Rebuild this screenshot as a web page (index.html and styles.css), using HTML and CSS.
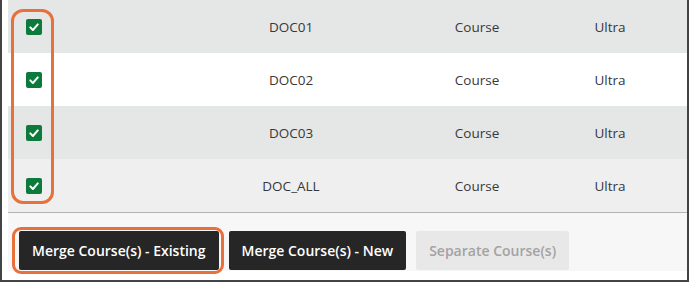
FILE: index.html
```html
<!DOCTYPE html>
<html>
<head>
  <title>Merge courses</title>
  <link rel="stylesheet" href="styles.css">
</head>
<body>
<div class="frame">
  <div class="list">
    <div class="row odd">
      <div class="cell check"><span class="box"><svg viewBox="0 0 16 16" width="16" height="16"><path d="M4.3 8.4 L6.9 11 L11.8 5.4" fill="none" stroke="#fff" stroke-width="2" stroke-linecap="round" stroke-linejoin="round"/></svg></span></div>
      <div class="cell name">DOC01</div>
      <div class="cell">Course</div>
      <div class="cell">Ultra</div>
    </div>
    <div class="row">
      <div class="cell check"><span class="box"><svg viewBox="0 0 16 16" width="16" height="16"><path d="M4.3 8.4 L6.9 11 L11.8 5.4" fill="none" stroke="#fff" stroke-width="2" stroke-linecap="round" stroke-linejoin="round"/></svg></span></div>
      <div class="cell name">DOC02</div>
      <div class="cell">Course</div>
      <div class="cell">Ultra</div>
    </div>
    <div class="row odd">
      <div class="cell check"><span class="box"><svg viewBox="0 0 16 16" width="16" height="16"><path d="M4.3 8.4 L6.9 11 L11.8 5.4" fill="none" stroke="#fff" stroke-width="2" stroke-linecap="round" stroke-linejoin="round"/></svg></span></div>
      <div class="cell name">DOC03</div>
      <div class="cell">Course</div>
      <div class="cell">Ultra</div>
    </div>
    <div class="row hover">
      <div class="cell check"><span class="box"><svg viewBox="0 0 16 16" width="16" height="16"><path d="M4.3 8.4 L6.9 11 L11.8 5.4" fill="none" stroke="#fff" stroke-width="2" stroke-linecap="round" stroke-linejoin="round"/></svg></span></div>
      <div class="cell name">DOC_ALL</div>
      <div class="cell">Course</div>
      <div class="cell">Ultra</div>
    </div>
    <div class="mark-checks"></div>
  </div>
  <div class="actions">
    <button class="btn primary focus">Merge Course(s) - Existing<span class="mark-btn"></span></button>
    <button class="btn primary">Merge Course(s) - New</button>
    <button class="btn disabled">Separate Course(s)</button>
  </div>
</div>
</body>
</html>
```

FILE: styles.css
```css
* { box-sizing: border-box; }

html, body { margin: 0; padding: 0; background: #fff; }

.frame {
  width: 689px;
  height: 282px;
  border-left: 2px solid #434343;
  border-right: 2px solid #434343;
  border-bottom: 2px solid #434343;
  padding: 0 0 9px 6px;
  background: #fff;
  font-family: "Open Sans", "Liberation Sans", sans-serif;
  overflow: hidden;
}

.list {
  position: relative;
  border-bottom: 1px solid #b4b4b4;
}

.row {
  display: grid;
  grid-template-columns: 52px 322px 190px 76px 1fr;
  height: 53px;
  align-items: center;
  background: #fff;
  color: #383838;
  font-size: 13.5px;
}
.row.odd { background: #e5e6e6; }
.row.hover { background: #efefef; }

.cell { text-align: center; }
.cell.name { padding-left: 140px; }
.cell.check { text-align: left; padding-left: 18px; display: flex; }

.box {
  width: 16px;
  height: 16px;
  border-radius: 2px;
  background: #0b7a3b;
  display: block;
}
.box svg { display: block; }

.mark-checks {
  position: absolute;
  left: 3px;
  top: 9px;
  width: 43px;
  height: 195px;
  border: 3px solid #e8703a;
  border-radius: 12px;
}

.actions {
  display: flex;
  gap: 10px;
  height: 58px;
  padding: 18px 0 0 11px;
  background: #f8f7f7;
}

.btn {
  position: relative;
  height: 39px;
  padding: 0 13px;
  border: none;
  border-radius: 2px;
  font-family: "Open Sans", "Liberation Sans", sans-serif;
  font-size: 14px;
  font-weight: 600;
}
.btn.primary { background: #262626; color: #fff; }
.btn.disabled { background: #e8e8e8; color: #a3a3a3; }

.mark-btn {
  position: absolute;
  left: -7px;
  right: -5px;
  top: -4px;
  bottom: -4px;
  border: 3px solid #e8703a;
  border-radius: 9px;
}
```
